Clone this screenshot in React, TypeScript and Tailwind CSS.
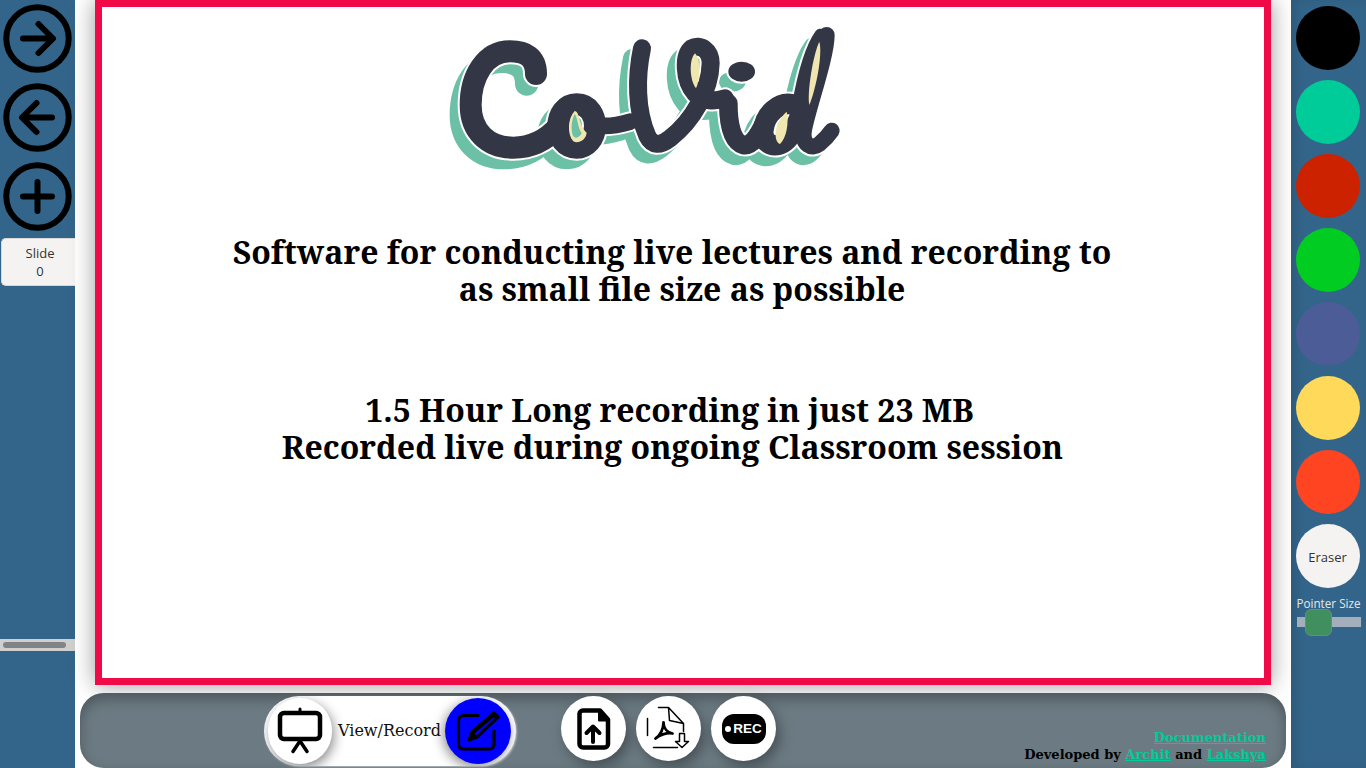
import * as React from "react"

const colours = ["bg-[#000000]", "bg-[#00cc99]", "bg-[#cc2200]", "bg-[#00cc22]", "bg-[#4c5c96]", "bg-[#ffd95a]", "bg-[#ff4422]"]

const NavIcon = ({ kind }: { kind: "next" | "prev" | "add" }) => (
  <svg width="69" height="69" viewBox="0 0 69 69" fill="none" stroke="#000" strokeWidth="6" strokeLinecap="round" strokeLinejoin="round">
    <circle cx="34.500" cy="34.500" r="31.200" />
    {kind === "next" && <path d="M20 34.500H49M35.500 20 50 34.500 35.500 49" />}
    {kind === "prev" && <path d="M49 34.500H20M33.500 20 19 34.500 33.500 49" />}
    {kind === "add" && <path d="M20 34.500H49M34.500 20V49" />}
  </svg>
)

const LOGO_STROKES = [
  { d: "M318 192C318 140 285 124 240 124C165 124 122 200 122 285C122 365 175 413 250 413C300 413 345 395 385 350", w: 66 },
  { d: "M440 283C480 283 495 320 495 348C495 385 470 413 440 413C405 413 385 385 385 348C385 315 405 283 440 283Z", w: 66 },
  { d: "M500 345C530 352 565 345 600 335", w: 50 },
  { d: "M636 115C618 200 618 300 652 378C667 408 690 408 720 385C790 330 840 240 842 160C842 120 810 100 785 115C760 135 760 210 795 250C820 275 855 275 885 265", w: 54 },
  { d: "M895 280C895 340 905 395 940 405C965 410 985 375 1000 345", w: 56 },
  { d: "M1095 285C1045 270 1005 315 1000 360C995 405 1040 420 1070 390C1095 365 1110 320 1118 295", w: 62 },
  { d: "M1105 285C1120 200 1140 120 1172 75", w: 38 },
  { d: "M1190 75C1190 140 1135 290 1122 360C1115 405 1145 420 1168 402C1182 390 1194 378 1205 362", w: 48 },
]

const Logo = () => {
  const strokes = (colour: string, extra: number) =>
    LOGO_STROKES.map((s) => (
      <path key={s.d} d={s.d} fill="none" stroke={colour} strokeWidth={s.w + extra} strokeLinecap="round" strokeLinejoin="round" />
    ))
  return (
    <svg width="430" height="170" viewBox="0 0 1290 510">
      <g transform="translate(-28 30)">
        {strokes("#6cc0a5", 4)}
        <ellipse cx="935" cy="185" rx="40" ry="30" fill="#6cc0a5" />
      </g>
      {strokes("#ffffff", 12)}
      <ellipse cx="935" cy="185" rx="46" ry="36" fill="#fff" />
      {strokes("#333644", 0)}
      <ellipse cx="935" cy="185" rx="40" ry="30" fill="#333644" />
      <path d="M434 303C450 305 445 345 470 368C468 390 445 402 430 394C412 375 412 325 434 303Z" fill="#f0e6b0" />
      <path d="M434 312C444 325 442 350 455 370C445 388 432 385 428 375C422 355 425 330 434 312Z" fill="#6cc0a5" />
      <path d="M795 130C815 150 810 210 798 235C780 215 775 150 795 130Z" fill="#f0e6b0" />
      <path d="M1168 95C1178 130 1160 230 1138 285C1130 250 1150 130 1168 95Z" fill="#f0e6b0" />
      <path d="M1070 305C1078 340 1068 385 1050 402C1030 395 1030 340 1070 305Z" fill="#f0e6b0" />
    </svg>
  )
}

const Easel = () => (
  <svg width="48" height="48" viewBox="0 0 48 48" fill="none" stroke="#000" strokeLinecap="round" strokeLinejoin="round">
    <rect x="4" y="6" width="40" height="26" rx="4" fill="#fff" strokeWidth="4.500" />
    <path d="M24 2V5" strokeWidth="3" />
    <path d="M24 34 17 44.500M24 34 31 44.500" strokeWidth="3.500" />
  </svg>
)

const EditIcon = () => (
  <svg width="44" height="44" viewBox="0 0 44 44" fill="none" stroke="#000" strokeWidth="3.200" strokeLinecap="round" strokeLinejoin="round">
    <path d="M22 6.500H8C4 6.500 2.500 9 2.500 12V35C2.500 38 4 40 8 40H33C36 40 38 38 38 35V22" />
    <path d="M38 4 42 8 21 28 13 31 16 23Z" fill="#000" />
    <path d="M37.500 8.500 38.500 9.500 20.500 26 18.500 24.500Z" fill="#0000ff" stroke="none" />
  </svg>
)

const UploadFile = () => (
  <svg width="34" height="44" viewBox="0 0 34 44" fill="none" stroke="#000" strokeLinejoin="round" strokeLinecap="round">
    <path d="M6 3.500H23L31 12.500V37C31 39 29.500 40.500 27.500 40.500H6C4 40.500 2.500 39 2.500 37V7C2.500 5 4 3.500 6 3.500Z" strokeWidth="4.500" />
    <path d="M22 3.500V13.500H31" fill="#000" strokeWidth="2" />
    <path d="M16 35V19.500M9.500 26 16 19.500 22.500 26" strokeWidth="4" />
  </svg>
)

const PdfIcon = () => (
  <svg width="52" height="52" viewBox="2.500 2.500 52 52" fill="none" stroke="#000" strokeWidth="1.500" strokeLinejoin="round" strokeLinecap="round">
    <path d="M7 18V35M18 7H28L43 23V31M28 7 29 20 43 23M13 47H37" />
    <path d="M15 38C20 35 23 28 23 22C23 28 27 32 32 33C27 32 19 34 15 38Z" strokeWidth="2.800" />
    <path d="M39 33H44V41H48L41.500 47 35 41H39Z" />
  </svg>
)

const RecIcon = () => (
  <div className="flex h-[30px] w-[44px] items-center justify-center gap-[2px] rounded-[12px] bg-black font-['Liberation_Sans',sans-serif] text-[13.500px] leading-none font-bold text-white">
    <div className="h-[6px] w-[6px] rounded-full bg-white" />
    <span>REC</span>
  </div>
)

const RoundButton = ({ children }: { children: React.ReactNode }) => (
  <div className="flex h-[65px] w-[65px] items-center justify-center rounded-full bg-white shadow-[4px_6px_14px_rgba(0,0,0,0.35)]">
    {children}
  </div>
)

export default function App() {
  return (
    <div className="flex h-screen w-full overflow-hidden bg-white font-['DejaVu_Serif',serif]">
      <aside className="flex h-full w-[75px] shrink-0 flex-col bg-[#33658a]">
        <div className="flex flex-col gap-[10px] pt-[3.500px] pl-[3px]">
          <NavIcon kind="next" />
          <NavIcon kind="prev" />
          <NavIcon kind="add" />
        </div>
        <div className="mt-[7.500px] ml-[1px] flex h-[48px] flex-col items-center justify-center rounded-l-[5px] border border-r-0 border-[#d8d8d8] bg-[#f5f3f2] pl-[3px] font-['Open_Sans',sans-serif] text-[13px] leading-[18px] text-[#333]">
          <span>Slide</span>
          <span>0</span>
        </div>
        <div className="mt-[353px] flex h-[12px] items-center bg-[#cfcfcf] px-[3px]">
          <div className="h-[6px] w-[63px] rounded-full bg-[#808487]" />
        </div>
      </aside>

      <main className="flex min-w-0 flex-1 flex-col">
        <div className="mx-[20px] flex h-[685px] shrink-0 flex-col items-center border-[7px] border-[#f00a47] bg-white font-['Noto_Serif','DejaVu_Serif',serif] text-[32px] leading-[37px] font-bold text-black shadow-[0_0_22px_rgba(0,0,0,0.4)]">
          <div className="mt-[3px] mr-[76px]">
            <Logo />
          </div>
          <div className="mt-[53px] mr-[22px] text-center">
            Software for conducting live lectures and recording to
            <br />
            <span className="ml-[20px]">as small file size as possible</span>
          </div>
          <div className="mt-[84px] mr-[21px] text-center">
            <span className="mr-[6px]">1.5 Hour Long recording in just 23 MB</span>
            <br />
            Recorded live during ongoing Classroom session
          </div>
        </div>

        <div className="mx-[5px] mt-[8px] flex h-[75px] items-start rounded-[24px] bg-[#6c7b83] pt-[3px] shadow-[inset_0_6px_14px_rgba(0,0,0,0.3)]">
          <div className="ml-[184px] flex h-[70px] w-[252px] items-center overflow-hidden rounded-full bg-white pl-[4px] shadow-[1px_1px_2px_rgba(255,255,255,0.5)]">
            <div className="flex h-[66px] w-[64px] shrink-0 items-center justify-center rounded-full bg-white shadow-[2px_4px_12px_rgba(0,0,0,0.45)]">
              <Easel />
            </div>
            <span className="ml-[6px] text-[16px] leading-none whitespace-nowrap text-[#111]">View/Record</span>
            <div className="ml-[4px] flex h-[66px] w-[66px] shrink-0 items-center justify-center rounded-full bg-[#0000ff] shadow-[-2px_3px_12px_rgba(0,0,0,0.45)]">
              <EditIcon />
            </div>
          </div>
          <div className="ml-[45px] flex gap-[10px]">
            <RoundButton>
              <UploadFile />
            </RoundButton>
            <RoundButton>
              <PdfIcon />
            </RoundButton>
            <RoundButton>
              <RecIcon />
            </RoundButton>
          </div>
          <div className="ml-auto self-end pr-[20px] pb-[5px] text-right text-[13px] leading-[17px] font-bold text-black">
            <div>
              <a className="text-[#00cc99] underline">Documentation</a>
            </div>
            <div>
              Developed by <a className="text-[#00cc99] underline">Archit</a> and{" "}
              <a className="text-[#00cc99] underline">Lakshya</a>
            </div>
          </div>
        </div>
      </main>

      <aside className="flex h-full w-[75px] shrink-0 flex-col items-center bg-[#33658a] pt-[6px] shadow-[inset_6px_0_10px_rgba(0,0,0,0.1)]">
        <div className="flex flex-col gap-[10px] pr-[2px]">
          {colours.map((c) => (
            <div key={c} className={`h-[64px] w-[64px] rounded-full ${c}`} />
          ))}
          <div className="flex h-[64px] w-[64px] items-center justify-center rounded-full bg-[#f5f3f2] pt-[3px] font-['Open_Sans',sans-serif] text-[13px] text-[#333]">
            Eraser
          </div>
        </div>
        <div className="mt-[8px] font-['Open_Sans',sans-serif] text-[11.700px] leading-[15px] whitespace-nowrap text-[#e4e8ec]">
          Pointer Size
        </div>
        <div className="relative mt-[6px] h-[10px] w-[64px] bg-[#a3afba]">
          <div className="absolute top-[-8px] left-[8px] h-[27px] w-[27px] rounded-[6px] border border-[#6b8a80] bg-[#3f8f5f]" />
        </div>
      </aside>
    </div>
  )
}
